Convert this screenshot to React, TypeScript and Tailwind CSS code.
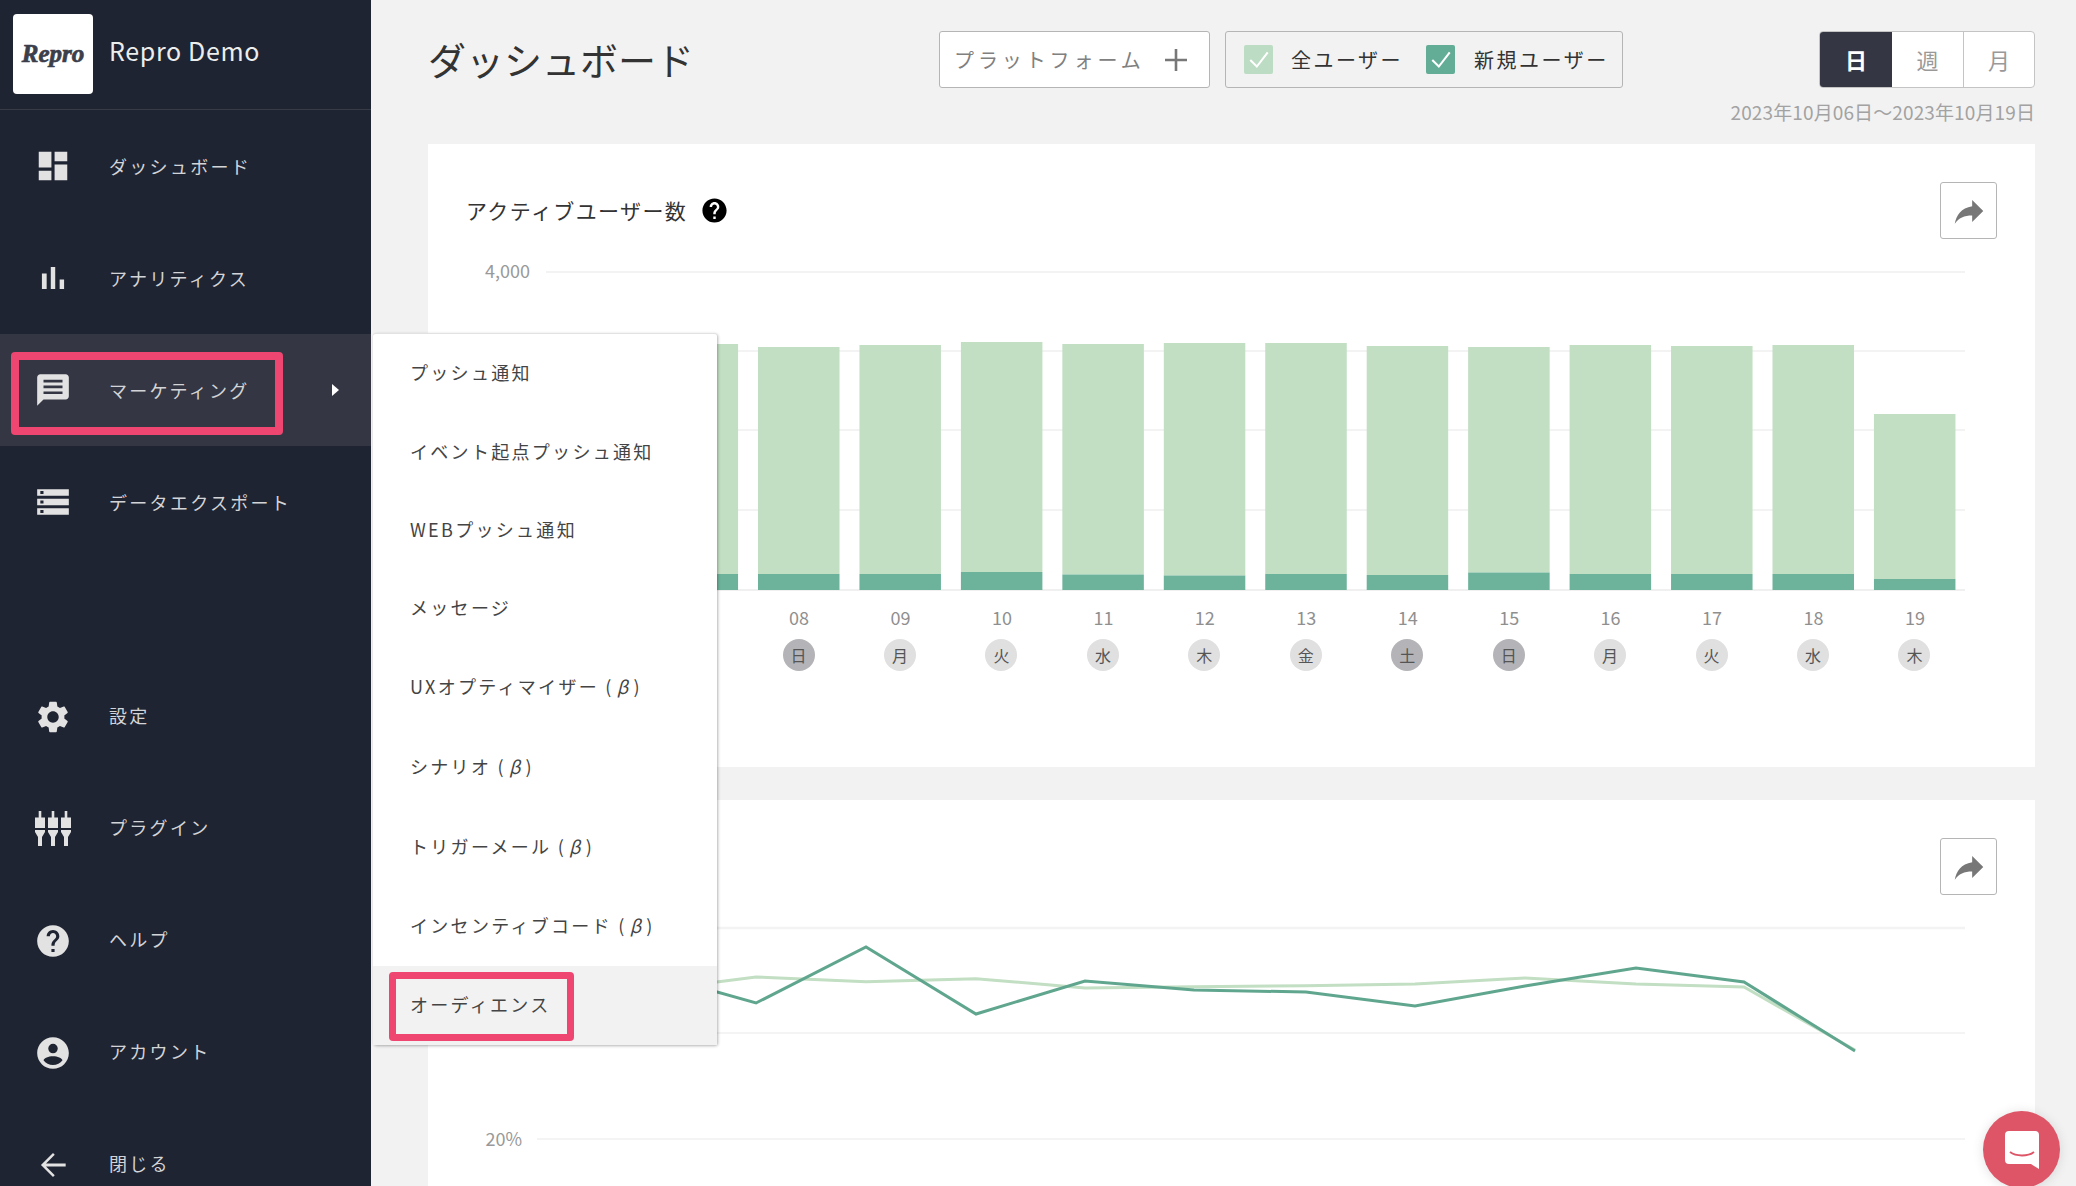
import React from "react";

const P = ({ d, size = 38, cls = "" }: { d: string; size?: number; cls?: string }) => (
  <svg width={size} height={size} viewBox="0 0 24 24" className={cls} fill="currentColor" fillRule="evenodd">
    <path d={d} />
  </svg>
);

const icons = {
  dashboard: "M3 13h8V3H3v10zm0 8h8v-6H3v6zm10 0h8V11h-8v10zm0-18v6h8V3h-8z",
  bars: "M5 9.2h3V19H5zM10.6 5h2.8v14h-2.8zm5.6 8H19v6h-2.8z",
  chat: "M20 2H4c-1.1 0-1.99.9-1.99 2L2 22l4-4h14c1.1 0 2-.9 2-2V4c0-1.1-.9-2-2-2zM6 5.5h12v1.7H6zM6 9.2h12v1.7H6zM6 12.9h12v1.7H6z",
  storage: "M2 20h20v-4H2v4zm2-3h2v2H4v-2zM2 4v4h20V4H2zm4 3H4V5h2v2zm-4 7h20v-4H2v4zm2-3h2v2H4v-2z",
  gear: "M19.14 12.94c.04-.3.06-.61.06-.94 0-.32-.02-.64-.07-.94l2.03-1.58c.18-.14.23-.41.12-.61l-1.92-3.32c-.12-.22-.37-.29-.59-.22l-2.39.96c-.5-.38-1.03-.7-1.62-.94l-.36-2.54c-.04-.24-.24-.41-.48-.41h-3.84c-.24 0-.43.17-.47.41l-.36 2.54c-.59.24-1.13.57-1.62.94l-2.39-.96c-.22-.08-.47 0-.59.22L2.74 8.87c-.12.21-.08.47.12.61l2.03 1.58c-.05.3-.09.63-.09.94s.02.64.07.94l-2.03 1.58c-.18.14-.23.41-.12.61l1.92 3.32c.12.22.37.29.59.22l2.39-.96c.5.38 1.03.7 1.62.94l.36 2.54c.05.24.24.41.48.41h3.84c.24 0 .44-.17.47-.41l.36-2.54c.59-.24 1.13-.56 1.62-.94l2.39.96c.22.08.47 0 .59-.22l1.92-3.32c.12-.22.07-.47-.12-.61l-2.01-1.58zM12 15.6c-1.98 0-3.6-1.62-3.6-3.6s1.62-3.6 3.6-3.6 3.6 1.62 3.6 3.6-1.62 3.6-3.6 3.6z",
  help: "M12 2C6.48 2 2 6.48 2 12s4.48 10 10 10 10-4.48 10-10S17.52 2 12 2zm1 17h-2v-2h2v2zm2.07-7.75l-.9.92C13.45 12.9 13 13.5 13 15h-2v-.5c0-1.1.45-2.1 1.17-2.83l1.24-1.26c.37-.36.59-.86.59-1.41 0-1.1-.9-2-2-2s-2 .9-2 2H8c0-2.21 1.79-4 4-4s4 1.79 4 4c0 .88-.36 1.68-.93 2.25z",
  account: "M12 2C6.48 2 2 6.48 2 12s4.48 10 10 10 10-4.48 10-10S17.52 2 12 2zM12 6.2a3 3 0 1 1 0 6 3 3 0 0 1 0-6zM12 14c3 0 5.6 1.1 6 2.6-1.3 1.8-3.6 3-6 3s-4.7-1.2-6-3c.4-1.5 3-2.6 6-2.6z",
  back: "M20 11H7.6l5.5-5.5L12 4.4 4.4 12l7.6 7.6 1.1-1.1L7.6 13H20v-2z",
  share: "M14 9V5l7 7-7 7v-4.1c-5 0-8.5 1.6-11 5.1 1-5 4-10 11-11z",
};

const PluginIcon = () => (
  <svg width="36" height="36" viewBox="0 0 36 36" fill="currentColor">
    {[5, 18, 31].map((c) => (
      <g key={c}>
        <rect x={c - 1.3} y="0" width="2.6" height="8" />
        <rect x={c - 5} y="6.5" width="10" height="10.5" />
        <path d={`M${c - 5} 19h10v2l-3 5v9h-4v-9l-3-5z`} />
      </g>
    ))}
  </svg>
);

const Item = ({
  icon,
  label,
  active,
  lower,
  children,
}: {
  icon: React.ReactNode;
  label: string;
  active?: boolean;
  lower?: boolean;
  children?: React.ReactNode;
}) => (
  <div className={`flex items-center shrink-0 ${lower ? "h-[111.9px]" : "h-[112px]"} ${active ? "bg-[#343743]" : ""}`}>
    <div className="ml-[34px] w-[38px] flex items-center justify-center text-[#e2e2e2]">{icon}</div>
    <span className={`ml-[37px] text-[18px] tracking-[2.3px] text-[#d3d4d7] ${lower ? "pb-[3px]" : ""}`}>{label}</span>
    {children}
  </div>
);

const menu: [string, string][] = [
  ["プッシュ通知", "pb-[3px]"],
  ["イベント起点プッシュ通知", "pb-[3px]"],
  ["WEBプッシュ通知", "pb-[4px]"],
  ["メッセージ", "pb-[7px]"],
];
const beta: [string, string][] = [
  ["UXオプティマイザー", "pb-[6px]"],
  ["シナリオ", "pb-[4px]"],
  ["トリガーメール", "pb-[3px]"],
  ["インセンティブコード", "pb-[3px]"],
];

const BASE = 590;
const tops: [number, number][] = [
  [344, 574], [344, 574], [347, 574], [345, 574], [342, 572], [344, 574.5], [343, 575.5],
  [343, 574], [346, 575], [347, 572.5], [345, 574], [346, 574], [345, 574], [414, 579],
];
const days = ["金", "土", "日", "月", "火", "水", "木", "金", "土", "日", "月", "火", "水", "木"];
const nums = ["06", "07", "08", "09", "10", "11", "12", "13", "14", "15", "16", "17", "18", "19"];

const dark = "646,972 756,1003 866,947 976,1014 1085,981 1194,990 1306,992 1415,1006 1525,986 1636,968 1744,982 1855,1051";
const light = "646,991 756,977 866,981.7 976,978.7 1085,988 1194,986.7 1306,985.7 1415,984 1525,978 1636,984 1744,987 1855,1050";

const ShareBtn = () => (
  <button className="w-[57px] h-[57px] flex items-center justify-center bg-white border border-[#b5b5b5] rounded-[3px] text-[#777]">
    <P d={icons.share} size={38} />
  </button>
);

const Check = ({ bg }: { bg: string }) => (
  <span className={`w-[29px] h-[29px] rounded-[2px] flex items-center justify-center ${bg}`}>
    <svg width="24" height="24" viewBox="0 0 22 22" fill="none" stroke="#fff" strokeWidth="1.9">
      <path d="M3 11l6 6L19 4" />
    </svg>
  </span>
);

export default function App() {
  return (
    <div className="relative flex w-[2076px] h-[1186px] overflow-hidden bg-[#f2f2f2] font-['Noto_Sans_CJK_JP','Noto_Sans',sans-serif] text-[#333]">
      <aside className="w-[371px] shrink-0 h-full bg-[#1f2432] flex flex-col overflow-hidden">
        <div className="h-[110px] shrink-0 border-b border-[#373b48] flex items-start">
          <div className="ml-[13px] mt-[14px] w-[80px] h-[80px] rounded-[4px] bg-white flex items-center justify-center">
            <span className="font-['Liberation_Serif',serif] italic font-bold text-[25px] text-[#3b3e4b] [-webkit-text-stroke:0.7px_#3b3e4b]">Repro</span>
          </div>
          <span className="ml-[16px] mt-[30px] text-[25px] leading-[40px] tracking-[0.65px] text-[#eceded]">Repro Demo</span>
        </div>
        <Item icon={<P d={icons.dashboard} />} label="ダッシュボード" />
        <Item icon={<P d={icons.bars} />} label="アナリティクス" />
        <Item active icon={<P d={icons.chat} />} label="マーケティング">
          <span className="ml-auto mr-[32px] w-0 h-0 border-y-[6px] border-y-transparent border-l-[7px] border-l-white" />
        </Item>
        <Item icon={<P d={icons.storage} />} label="データエクスポート" />
        <div className="mt-[103px] flex flex-col">
          <Item lower icon={<P d={icons.gear} />} label="設定" />
          <Item lower icon={<PluginIcon />} label="プラグイン" />
          <Item lower icon={<P d={icons.help} />} label="ヘルプ" />
          <Item lower icon={<P d={icons.account} />} label="アカウント" />
          <Item lower icon={<P d={icons.back} />} label="閉じる" />
        </div>
      </aside>

      <main className="flex-1 min-w-0 pl-[57px] pr-[41px]">
        <div className="flex items-center pt-[31px]">
          <h1 className="w-[511px] text-[38px] leading-[55px] pb-[2px] text-[#333]">ダッシュボード</h1>
          <div className="w-[271px] h-[57px] flex items-center bg-white border border-[#b5b5b5] rounded-[3px] pl-[14px]">
            <span className="text-[20px] tracking-[3.9px] text-[#808080]">プラットフォーム</span>
            <svg width="24" height="24" viewBox="0 0 24 24" className="ml-[19px] text-[#777]" stroke="currentColor" strokeWidth="2.6">
              <path d="M12 1v22M1 12h22" />
            </svg>
          </div>
          <div className="ml-[15px] w-[398px] h-[57px] flex items-center border border-[#b5b5b5] rounded-[3px] pl-[18px]">
            <Check bg="bg-[#bcdcc3]" />
            <span className="ml-[18px] text-[20px] tracking-[2.5px] text-[#333]">全ユーザー</span>
            <span className="ml-[23px]"><Check bg="bg-[#63ad96]" /></span>
            <span className="ml-[19px] text-[20px] tracking-[2.5px] text-[#333]">新規ユーザー</span>
          </div>
          <div className="ml-auto w-[216px] h-[57px] flex border border-[#c4c4c4] rounded-[4px] bg-white text-[22px] text-[#999] overflow-hidden">
            <span className="w-[72px] bg-[#343743] text-white font-bold flex items-center justify-center">日</span>
            <span className="w-[72px] flex items-center justify-center border-r border-[#c4c4c4]">週</span>
            <span className="flex-1 flex items-center justify-center">月</span>
          </div>
        </div>
        <p className="mt-[11px] text-right text-[19px] leading-[26px] tracking-[0.12px] text-[#a2a2a2]">2023年10月06日〜2023年10月19日</p>

        <section className="mt-[19px] h-[623px] bg-white">
          <div className="flex items-center justify-between pt-[38px] pl-[38px] pr-[38px]">
            <div className="flex items-center">
              <h2 className="text-[21px] tracking-[1.4px] text-[#333]">アクティブユーザー数</h2>
              <P d={icons.help} size={29} cls="ml-[13px] text-black" />
            </div>
            <ShareBtn />
          </div>
          <svg width="1607" height="340" viewBox="428 260 1607 340" className="block mt-[21px]">
            {[272, 351, 430, 510].map((y) => (
              <line key={y} x1="546" x2="1965" y1={y} y2={y} stroke="#f3f3f3" strokeWidth="2" />
            ))}
            <line x1="546" x2="1965" y1="590" y2="590" stroke="#f0f0f0" strokeWidth="2" />
            <text x="530" y="278" textAnchor="end" fontSize="18" fill="#999">4,000</text>
            {tops.map(([t, d], i) => {
              const x = 758 + 101.45 * (i - 2);
              return (
                <g key={i}>
                  <rect x={x} y={t} width="81.5" height={d - t} fill="#c2dec3" />
                  <rect x={x} y={d} width="81.5" height={BASE - d} fill="#6db39b" />
                </g>
              );
            })}
          </svg>
          <div className="flex pl-[117px] pt-[3px]">
            {nums.map((n, i) => (
              <div key={n} className="w-[101.45px] flex flex-col items-center">
                <span className="ml-[1px] text-[18px] leading-[28px] text-[#8f8f8f]">{n}</span>
                <span
                  className={`mt-[8px] w-[32px] h-[32px] rounded-full flex items-center justify-center text-[16px] text-[#555] ${
                    days[i] === "土" || days[i] === "日" ? "bg-[#b4b4b8]" : "bg-[#e0e0e0]"
                  }`}
                >
                  {days[i]}
                </span>
              </div>
            ))}
          </div>
        </section>

        <section className="mt-[33px] h-[420px] bg-white">
          <div className="flex justify-end pt-[38px] pr-[38px]">
            <ShareBtn />
          </div>
          <svg width="1607" height="240" viewBox="428 920 1607 240" className="block mt-[25px]">
            <line x1="537" x2="1965" y1="928" y2="928" stroke="#f3f3f3" strokeWidth="2.5" />
            <line x1="537" x2="1965" y1="1033" y2="1033" stroke="#f2f0f0" strokeWidth="1.5" />
            <line x1="537" x2="1965" y1="1139" y2="1139" stroke="#f2f0f0" strokeWidth="1.5" />
            <text x="522" y="1146" textAnchor="end" fontSize="18" fill="#999">20%</text>
            <polyline points={light} fill="none" stroke="#c2dec3" strokeWidth="3" />
            <polyline points={dark} fill="none" stroke="#60a68f" strokeWidth="3" />
          </svg>
        </section>
      </main>

      {/* flyout menu */}
      <div className="absolute left-[373px] top-[333px] w-[344px] h-[712px] flex flex-col bg-white rounded-[3px] border-t border-[#e2e2e2] shadow-[1px_1px_3px_rgba(0,0,0,0.3)] text-[18px] tracking-[2.3px] text-[#444]">
        {menu.map(([m, pb]) => (
          <div key={m} className={`h-[79px] flex items-center pl-[37px] ${pb}`}>{m}</div>
        ))}
        {beta.map(([m, pb]) => (
          <div key={m} className={`h-[79px] flex items-center pl-[37px] ${pb}`}>
            <span className="whitespace-pre">{m} (<span className="italic mx-[3px]">β</span>)</span>
          </div>
        ))}
        <div className="flex-1 flex items-center pl-[37px] pb-[3px] bg-[#f2f2f2]">オーディエンス</div>
      </div>

      {/* annotation boxes */}
      <div className="absolute left-[11px] top-[352px] w-[272px] h-[83px] border-[8px] border-[#ee4670] rounded-[4px]" />
      <div className="absolute left-[389px] top-[972px] w-[185px] h-[69px] border-[7px] border-[#ee4670] rounded-[4px]" />

      {/* chat launcher */}
      <div className="absolute left-[1983px] top-[1111px] w-[77px] h-[77px] rounded-full bg-[#dd5566] shadow-[0_1px_12px_rgba(0,0,0,0.12)] flex items-center justify-center">
        <svg width="34" height="38" viewBox="0 0 34 38">
          <path d="M4 0h26a4 4 0 0 1 4 4v34l-8-5H4a4 4 0 0 1-4-4V4a4 4 0 0 1 4-4z" fill="#fff" />
          <path d="M5 21c6 4.5 18 4.5 24 0" fill="none" stroke="#dd5566" strokeWidth="2" />
        </svg>
      </div>
    </div>
  );
}
